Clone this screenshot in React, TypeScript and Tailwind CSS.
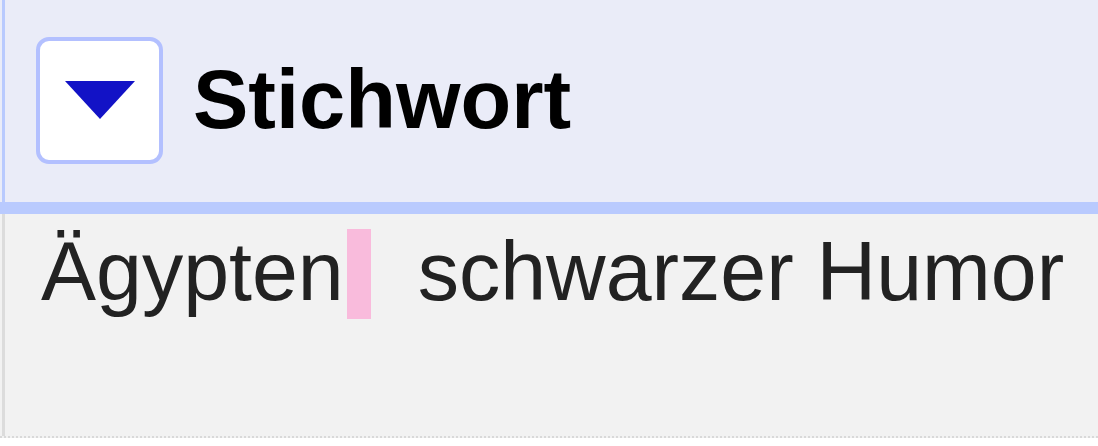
import React from "react";

export default function App() {
  return (
    <div className="w-[1098px] h-[446px] bg-white font-['Liberation_Sans',Arial,sans-serif] overflow-hidden">
      <div className="h-[202px] bg-[#eaecf8] pl-[2px]">
        <div className="h-full border-l-[3px] border-[#b9cafe] flex items-center pl-[31px]">
          <div className="w-[127px] h-[127px] mt-[-2px] rounded-[13px] border-[4px] border-[#b3c0ff] bg-white flex items-center justify-center">
            <svg width="70" height="38" viewBox="0 0 70 38">
              <polygon points="0,0 70,0 35,38" fill="#1212c6" />
            </svg>
          </div>
          <span className="ml-[30px] mt-[-3px] text-[83px] font-bold text-black leading-none">Stichwort</span>
        </div>
      </div>
      <div className="h-[12px] bg-[#b9cafe]" />
      <div className="h-[224px] bg-[#f2f2f2] pl-[2px] border-b-[2px] border-dotted border-[#d9d9d9]">
        <div className="h-full border-l-[3px] border-[#dcdcdc] flex items-start pl-[36px] pt-[9px] text-[82.5px] leading-[96px] text-[#222222]">
          <span>Ägypten</span>
          <span className="inline-block w-[24px] h-[90px] ml-[3px] mt-[6px] bg-[#f9bbdc]" />
          <span className="ml-[47px]">schwarzer Humor</span>
        </div>
      </div>
    </div>
  );
}
